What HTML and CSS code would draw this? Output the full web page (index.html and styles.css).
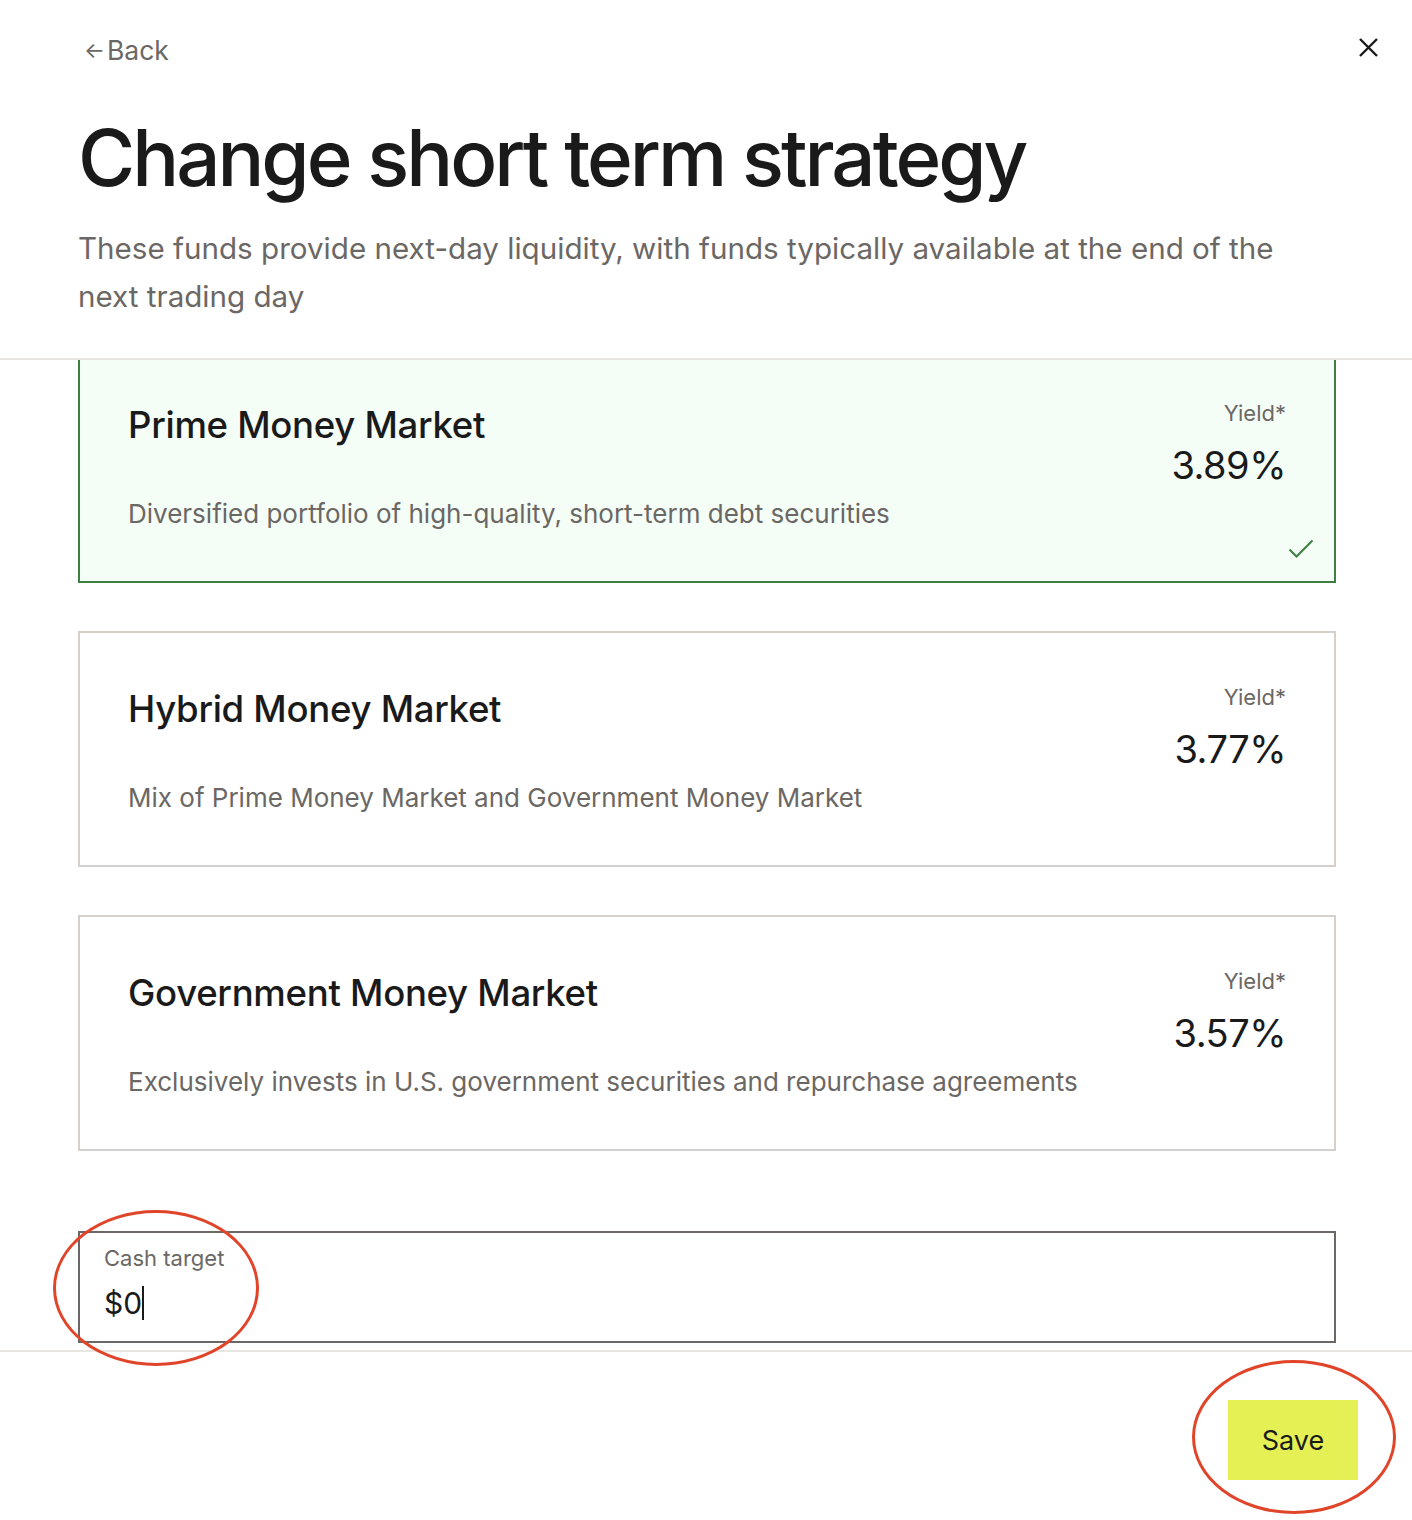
FILE: index.html
```html
<!DOCTYPE html>
<html lang="en">
<head>
    <meta charset="UTF-8">
    <meta name="viewport" content="width=device-width, initial-scale=1.0">
    <title>Change short term strategy</title>
    <link rel="stylesheet" href="styles.css">
</head>
<body>
    <div class="modal">
        <div class="modal-header">
            <div class="top-row">
                <a href="#" class="back-link"><span class="back-arrow">&larr;</span>Back</a>
                <button class="close-btn" aria-label="Close">
                    <svg width="21" height="21" viewBox="0 0 21 21"><path d="M2 2 L19 19 M19 2 L2 19" stroke="#1a1a1a" stroke-width="2.4" fill="none"/></svg>
                </button>
            </div>
            <h1>Change short term strategy</h1>
            <p class="intro">These funds provide next-day liquidity, with funds typically available at the end of the next trading day</p>
        </div>

        <div class="modal-body">
            <div class="fund-list">
                <div class="fund-card selected">
                    <div class="fund-info">
                        <h2>Prime Money Market</h2>
                        <p>Diversified portfolio of high-quality, short-term debt securities</p>
                    </div>
                    <div class="fund-yield">
                        <span class="yield-label">Yield*</span>
                        <span class="yield-value">3.89%</span>
                    </div>
                    <svg class="check" width="26" height="20" viewBox="0 0 26 20"><path d="M1.5 10.5 L8.5 17.5 L24.5 1.5" stroke="#3d7f42" stroke-width="2" fill="none"/></svg>
                </div>
                <div class="fund-card">
                    <div class="fund-info">
                        <h2>Hybrid Money Market</h2>
                        <p>Mix of Prime Money Market and Government Money Market</p>
                    </div>
                    <div class="fund-yield">
                        <span class="yield-label">Yield*</span>
                        <span class="yield-value">3.77%</span>
                    </div>
                </div>
                <div class="fund-card">
                    <div class="fund-info">
                        <h2>Government Money Market</h2>
                        <p>Exclusively invests in U.S. government securities and repurchase agreements</p>
                    </div>
                    <div class="fund-yield">
                        <span class="yield-label">Yield*</span>
                        <span class="yield-value">3.57%</span>
                    </div>
                </div>
            </div>

            <div class="cash-field">
                <label for="cash-target">Cash target</label>
                <div class="cash-value">$0<span class="caret"></span></div>
                <span class="annotation cash-mark"></span>
            </div>
        </div>

        <div class="modal-footer">
            <div class="save-wrap">
                <button class="save-btn">Save</button>
                <span class="annotation save-mark"></span>
            </div>
        </div>
    </div>
</body>
</html>
```

FILE: styles.css
```css
body {
    margin: 0;
    background-color: #fff;
    font-family: Inter, "Noto Sans", Arial, sans-serif;
    color: #1a1a1a;
}
.modal {
    width: 1412px;
    height: 1520px;
    display: flex;
    flex-direction: column;
    overflow: hidden;
}
.modal-header {
    position: relative;
    z-index: 1;
    background-color: #fff;
    padding: 0 76px 0 78px;
    border-bottom: 2px solid #e8e6e3;
    height: 360px;
    flex-shrink: 0;
    box-sizing: border-box;
}
.top-row {
    display: flex;
    justify-content: space-between;
    align-items: center;
    padding-top: 32px;
    height: 32px;
}
.back-link {
    color: #6b6764;
    text-decoration: none;
    font-size: 26.5px;
    display: flex;
    align-items: center;
    margin-left: 6px;
    margin-top: 4px;
}
.back-arrow {
    font-size: 22px;
    margin-right: 2px;
}
.close-btn {
    background: none;
    border: none;
    padding: 0;
    margin-right: -43px;
    margin-top: -2px;
    cursor: pointer;
    display: flex;
}
h1 {
    font-size: 78px;
    font-weight: 500;
    letter-spacing: -3px;
    margin: 44px 0 0;
    line-height: 100px;
}
.intro {
    font-size: 29.6px;
    color: #6b6764;
    line-height: 48px;
    margin: 16px 0 0;
    max-width: 1240px;
}
.modal-body {
    flex: 1;
    padding: 0 76px 0 78px;
    border-bottom: 2px solid #e8e6e3;
}
.fund-list {
    display: flex;
    flex-direction: column;
    gap: 48px;
    margin-top: -13px;
}
.fund-card {
    position: relative;
    display: flex;
    justify-content: space-between;
    height: 236px;
    box-sizing: border-box;
    border: 2px solid #d5d0cc;
    padding: 0 48px;
}
.fund-card.selected {
    border-color: #3d7f42;
    background-color: #f4fdf6;
}
.fund-info h2 {
    font-size: 36.6px;
    font-weight: 500;
    letter-spacing: -0.3px;
    margin: 54px 0 0;
    line-height: 44px;
}
.fund-info p {
    font-size: 26px;
    color: #6b6764;
    margin: 50px 0 0;
    line-height: 34px;
}
.fund-yield {
    display: flex;
    flex-direction: column;
    align-items: flex-end;
    padding-top: 50px;
}
.yield-label {
    font-size: 22px;
    color: #6b6764;
    line-height: 28px;
}
.yield-value {
    font-size: 38px;
    line-height: 48px;
    margin-top: 14px;
    letter-spacing: -0.5px;
}
.check {
    position: absolute;
    right: 20px;
    bottom: 22px;
}
.cash-field {
    position: relative;
    margin-top: 80px;
    border: 2px solid #6b6764;
    height: 112px;
    box-sizing: border-box;
    padding: 11px 24px;
}
.cash-field label {
    display: block;
    font-size: 22px;
    color: #6b6764;
    line-height: 28px;
}
.cash-value {
    font-size: 30px;
    line-height: 40px;
    margin-top: 11px;
    display: flex;
    align-items: center;
}
.caret {
    display: inline-block;
    width: 2px;
    height: 34px;
    background-color: #1a1a1a;
    margin-left: 0;
}
.modal-footer {
    height: 168px;
    flex-shrink: 0;
    display: flex;
    justify-content: flex-end;
    align-items: flex-start;
    padding-top: 48px;
    box-sizing: border-box;
    padding-right: 54px;
}
.save-wrap {
    position: relative;
}
.save-btn {
    background-color: #e5f055;
    border: none;
    width: 130px;
    height: 80px;
    font-family: inherit;
    font-size: 27px;
    color: #1a1a1a;
    cursor: pointer;
}
.annotation {
    position: absolute;
    z-index: 2;
    border: 3px solid #e0452a;
    border-radius: 50%;
    pointer-events: none;
}
.cash-mark {
    left: -27px;
    top: -23px;
    width: 200px;
    height: 150px;
}
.save-mark {
    left: -36px;
    top: -40px;
    width: 198px;
    height: 148px;
}
```
